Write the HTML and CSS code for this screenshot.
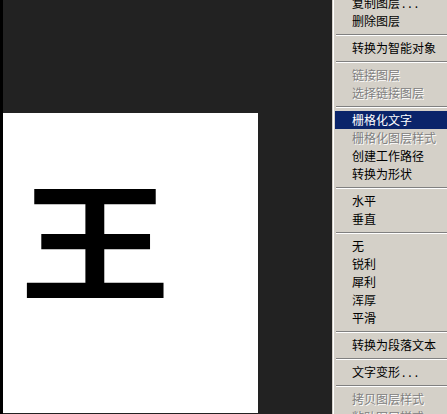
FILE: index.html
```html
<!DOCTYPE html>
<html>
<head>
<meta charset="utf-8">
<link rel="stylesheet" href="styles.css">
</head>
<body>
<div class="screen">
  <div class="paper"><span class="glyph">王</span></div>
</div>
<div class="menu">
  <div class="item">复制图层<span class="dots">...</span></div>
  <div class="item">删除图层</div>
  <div class="sep"></div>
  <div class="item">转换为智能对象</div>
  <div class="sep"></div>
  <div class="item disabled">链接图层</div>
  <div class="item disabled">选择链接图层</div>
  <div class="sep"></div>
  <div class="item active">栅格化文字</div>
  <div class="item disabled">栅格化图层样式</div>
  <div class="item">创建工作路径</div>
  <div class="item">转换为形状</div>
  <div class="sep"></div>
  <div class="item">水平</div>
  <div class="item">垂直</div>
  <div class="sep"></div>
  <div class="item">无</div>
  <div class="item">锐利</div>
  <div class="item">犀利</div>
  <div class="item">浑厚</div>
  <div class="item">平滑</div>
  <div class="sep"></div>
  <div class="item">转换为段落文本</div>
  <div class="sep"></div>
  <div class="item">文字变形<span class="dots">...</span></div>
  <div class="sep"></div>
  <div class="item disabled">拷贝图层样式</div>
  <div class="item disabled">粘贴图层样式</div>
</div>
</body>
</html>
```

FILE: styles.css
```css
html, body {
  margin: 0;
  padding: 0;
}
body {
  width: 447px;
  height: 414px;
  overflow: hidden;
  position: relative;
  background: #222222;
  font-family: "Noto Sans CJK SC", sans-serif;
}
.screen {
  height: 414px;
  box-sizing: border-box;
  border-left: 3px solid #000;
  padding-top: 113px;
}
.paper {
  width: 255px;
  height: 300px;
  background: #fff;
  box-sizing: border-box;
  padding-top: 59px;
  padding-left: 17px;
}
.glyph {
  display: block;
  font-family: "Noto Sans CJK SC", sans-serif;
  font-size: 150px;
  font-weight: 600;
  line-height: 1;
  color: #000;
  transform: scaleY(0.86);
  transform-origin: 0 0;
}
.menu {
  position: absolute;
  left: 332px;
  top: -9px;
  width: 130px;
  background: #d4d0c8;
  border: 1px solid;
  border-color: #d4d0c8 #404040 #404040 #d4d0c8;
  box-shadow: inset 1px 1px 0 #fff, inset -1px -1px 0 #808080;
  padding: 2px;
  font-size: 12px;
  color: #000;
}
.item {
  height: 18px;
  line-height: 18px;
  padding-left: 17px;
  white-space: nowrap;
}
.dots {
  letter-spacing: 3px;
  padding-left: 2px;
}
.item.active {
  background: #0a246a;
  color: #fff;
}
.item.disabled {
  color: #808080;
  text-shadow: 1px 1px 0 #fff;
}
.sep {
  height: 9px;
  box-sizing: border-box;
  padding-top: 4px;
  margin-left: 1px;
}
.sep::before {
  content: "";
  display: block;
  border-top: 1px solid #808080;
  border-bottom: 1px solid #fff;
}
```
